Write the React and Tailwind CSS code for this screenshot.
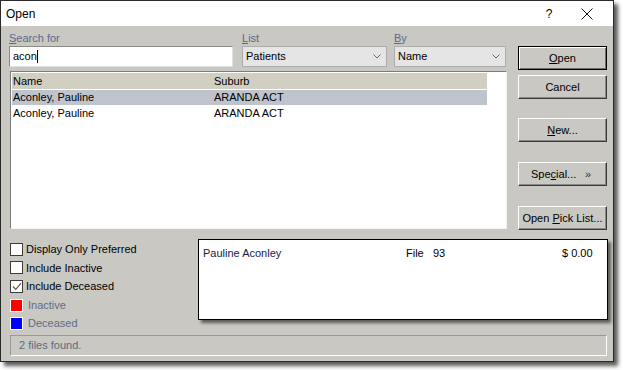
import React from "react";

const font = { fontFamily: '"Liberation Sans", Arial, sans-serif' };

function Label({ u, rest }) {
  return (
    <div className="h-[16px] text-[11px] leading-[16px] text-[#5a6a8c]">
      <span className="underline">{u}</span>
      {rest}
    </div>
  );
}

function Combo({ value, width }) {
  return (
    <div className={`${width} h-[21px] bg-[#e5e5e5] border border-[#adadad] flex items-center justify-between pl-[3px] pr-[5px] text-[11px]`}>
      <span>{value}</span>
      <svg width="8" height="5" viewBox="0 0 8 5">
        <path d="M0.5 0.5 L4 4 L7.5 0.5" fill="none" stroke="#6b6b6b" strokeWidth="1" />
      </svg>
    </div>
  );
}

function Btn({ children, def, className = "" }) {
  return (
    <div
      className={`w-[89px] h-[24px] flex items-center justify-center text-[11px] text-black bg-[#c9c8c2] ${
        def
          ? "border border-black shadow-[inset_1px_1px_0_#ffffff,inset_-1px_-1px_0_#6e6e6e]"
          : "border-t border-l border-white border-r border-b border-r-[#3a3a3a] border-b-[#3a3a3a] shadow-[inset_-1px_-1px_0_#8a8a8a]"
      } ${className}`}
    >
      {children}
    </div>
  );
}

function Check({ checked, children }) {
  return (
    <div className="flex items-center h-[19px] text-[11px] text-black">
      <div className="w-[13px] h-[13px] bg-white border border-[#3c3c3c] flex items-center justify-center mr-[3px]">
        {checked && (
          <svg width="10" height="9" viewBox="0 0 10 9">
            <path d="M1 4.5 L3.8 7.3 L9 1.2" fill="none" stroke="#5a5a5a" strokeWidth="1.2" />
          </svg>
        )}
      </div>
      {children}
    </div>
  );
}

function Swatch({ color, children }) {
  return (
    <div className="flex items-center h-[19px] text-[11px] text-[#5f6b8a]">
      <div className={`w-[13px] h-[13px] ${color} border border-white mr-[5px]`} />
      {children}
    </div>
  );
}

export default function App() {
  return (
    <div className="w-[623px] h-[370px] bg-white overflow-hidden" style={font}>
      <div className="w-[614px] h-[362px] border border-[#2a2a2a] bg-[#c9c8c2] shadow-[4px_4px_4px_rgba(0,0,0,0.65)] flex flex-col">
        {/* Title bar */}
        <div className="h-[25px] bg-white flex items-center pl-[5px] text-[12px] text-black">
          <span className="flex-1">Open</span>
          <span className="w-[20px] text-center mr-[22px] text-[12px]">?</span>
          <svg width="12" height="12" viewBox="0 0 12 12" className="mr-[20px]">
            <path d="M0.5 0.5 L11.5 11.5 M11.5 0.5 L0.5 11.5" stroke="#111" strokeWidth="1" />
          </svg>
        </div>

        {/* Top section */}
        <div className="flex pl-[8px] pt-[4px]">
          <div className="w-[498px] flex flex-col">
            <div className="flex">
              <div className="w-[224px] mr-[9px]">
                <Label u="S" rest="earch for" />
                <div className="h-[21px] bg-white border border-[#8a8a8a] border-r-[#e0e0e0] border-b-[#e0e0e0] flex items-center pl-[3px] text-[11px]">
                  acon<span className="w-px h-[13px] bg-black" />
                </div>
              </div>
              <div className="w-[145px] mr-[7px]">
                <Label u="L" rest="ist" />
                <Combo value="Patients" width="w-[145px]" />
              </div>
              <div className="w-[112px]">
                <Label u="B" rest="y" />
                <Combo value="Name" width="w-[112px]" />
              </div>
            </div>

            {/* List */}
            <div className="ml-[1px] mt-[4px] w-[497px] h-[158px] bg-white border border-[#7c7c7c] border-r-[#f4f4f4] border-b-[#f4f4f4] p-[1px] text-[11px] text-black">
              <div className="w-[475px] h-[16px] bg-[#d0cfc2] flex items-center pl-[1px]">
                <span className="w-[201px]">Name</span>
                <span>Suburb</span>
              </div>
              <div className="w-[475px] h-[15px] mt-[1px] bg-[#bfc4cc] flex items-center pl-[1px]">
                <span className="w-[201px]">Aconley, Pauline</span>
                <span>ARANDA ACT</span>
              </div>
              <div className="w-[475px] h-[16px] flex items-center pl-[1px]">
                <span className="w-[201px]">Aconley, Pauline</span>
                <span>ARANDA ACT</span>
              </div>
            </div>
          </div>

          {/* Buttons */}
          <div className="ml-[11px] pt-[16px] flex flex-col">
            <Btn def>
              <span><span className="underline">O</span>pen</span>
            </Btn>
            <Btn className="mt-[5px]">Cancel</Btn>
            <Btn className="mt-[19px]">
              <span><span className="underline">N</span>ew...</span>
            </Btn>
            <Btn className="mt-[20px]">
              <span className="flex w-full pl-[12px] pr-[15px] justify-between">
                <span>Spe<span className="underline">c</span>ial...</span>
                <span className="text-[#333]">»</span>
              </span>
            </Btn>
            <Btn className="mt-[20px]">
              <span>Open <span className="underline">P</span>ick List...</span>
            </Btn>
          </div>
        </div>

        {/* Bottom section */}
        <div className="flex pl-[9px] mt-[10px] h-[93px]">
          <div className="w-[188px] flex flex-col">
            <Check>Display Only Preferred</Check>
            <Check>Include Inactive</Check>
            <Check checked>Include Deceased</Check>
            <Swatch color="bg-[#ff0000]">Inactive</Swatch>
            <Swatch color="bg-[#0000ff]">Deceased</Swatch>
          </div>
          <div className="w-[410px] h-[81px] -mt-[1px] bg-white border border-black shadow-[3px_3px_3px_rgba(0,0,0,0.55)] flex items-start pt-[5px] pl-[4px] text-[11px] text-[#1a1a4a]">
            <span className="w-[203px]">Pauline Aconley</span>
            <span className="w-[27px] text-black">File</span>
            <span className="w-[129px] text-black">93</span>
            <span className="text-black">$ 0.00</span>
          </div>
        </div>

        {/* Status bar */}
        <div className="ml-[9px] mt-[2px] w-[597px] h-[21px] border border-[#9a9a9a] border-r-white border-b-white flex items-center pl-[8px] text-[11px] text-[#5f6b82]">
          2 files found.
        </div>
      </div>
    </div>
  );
}
